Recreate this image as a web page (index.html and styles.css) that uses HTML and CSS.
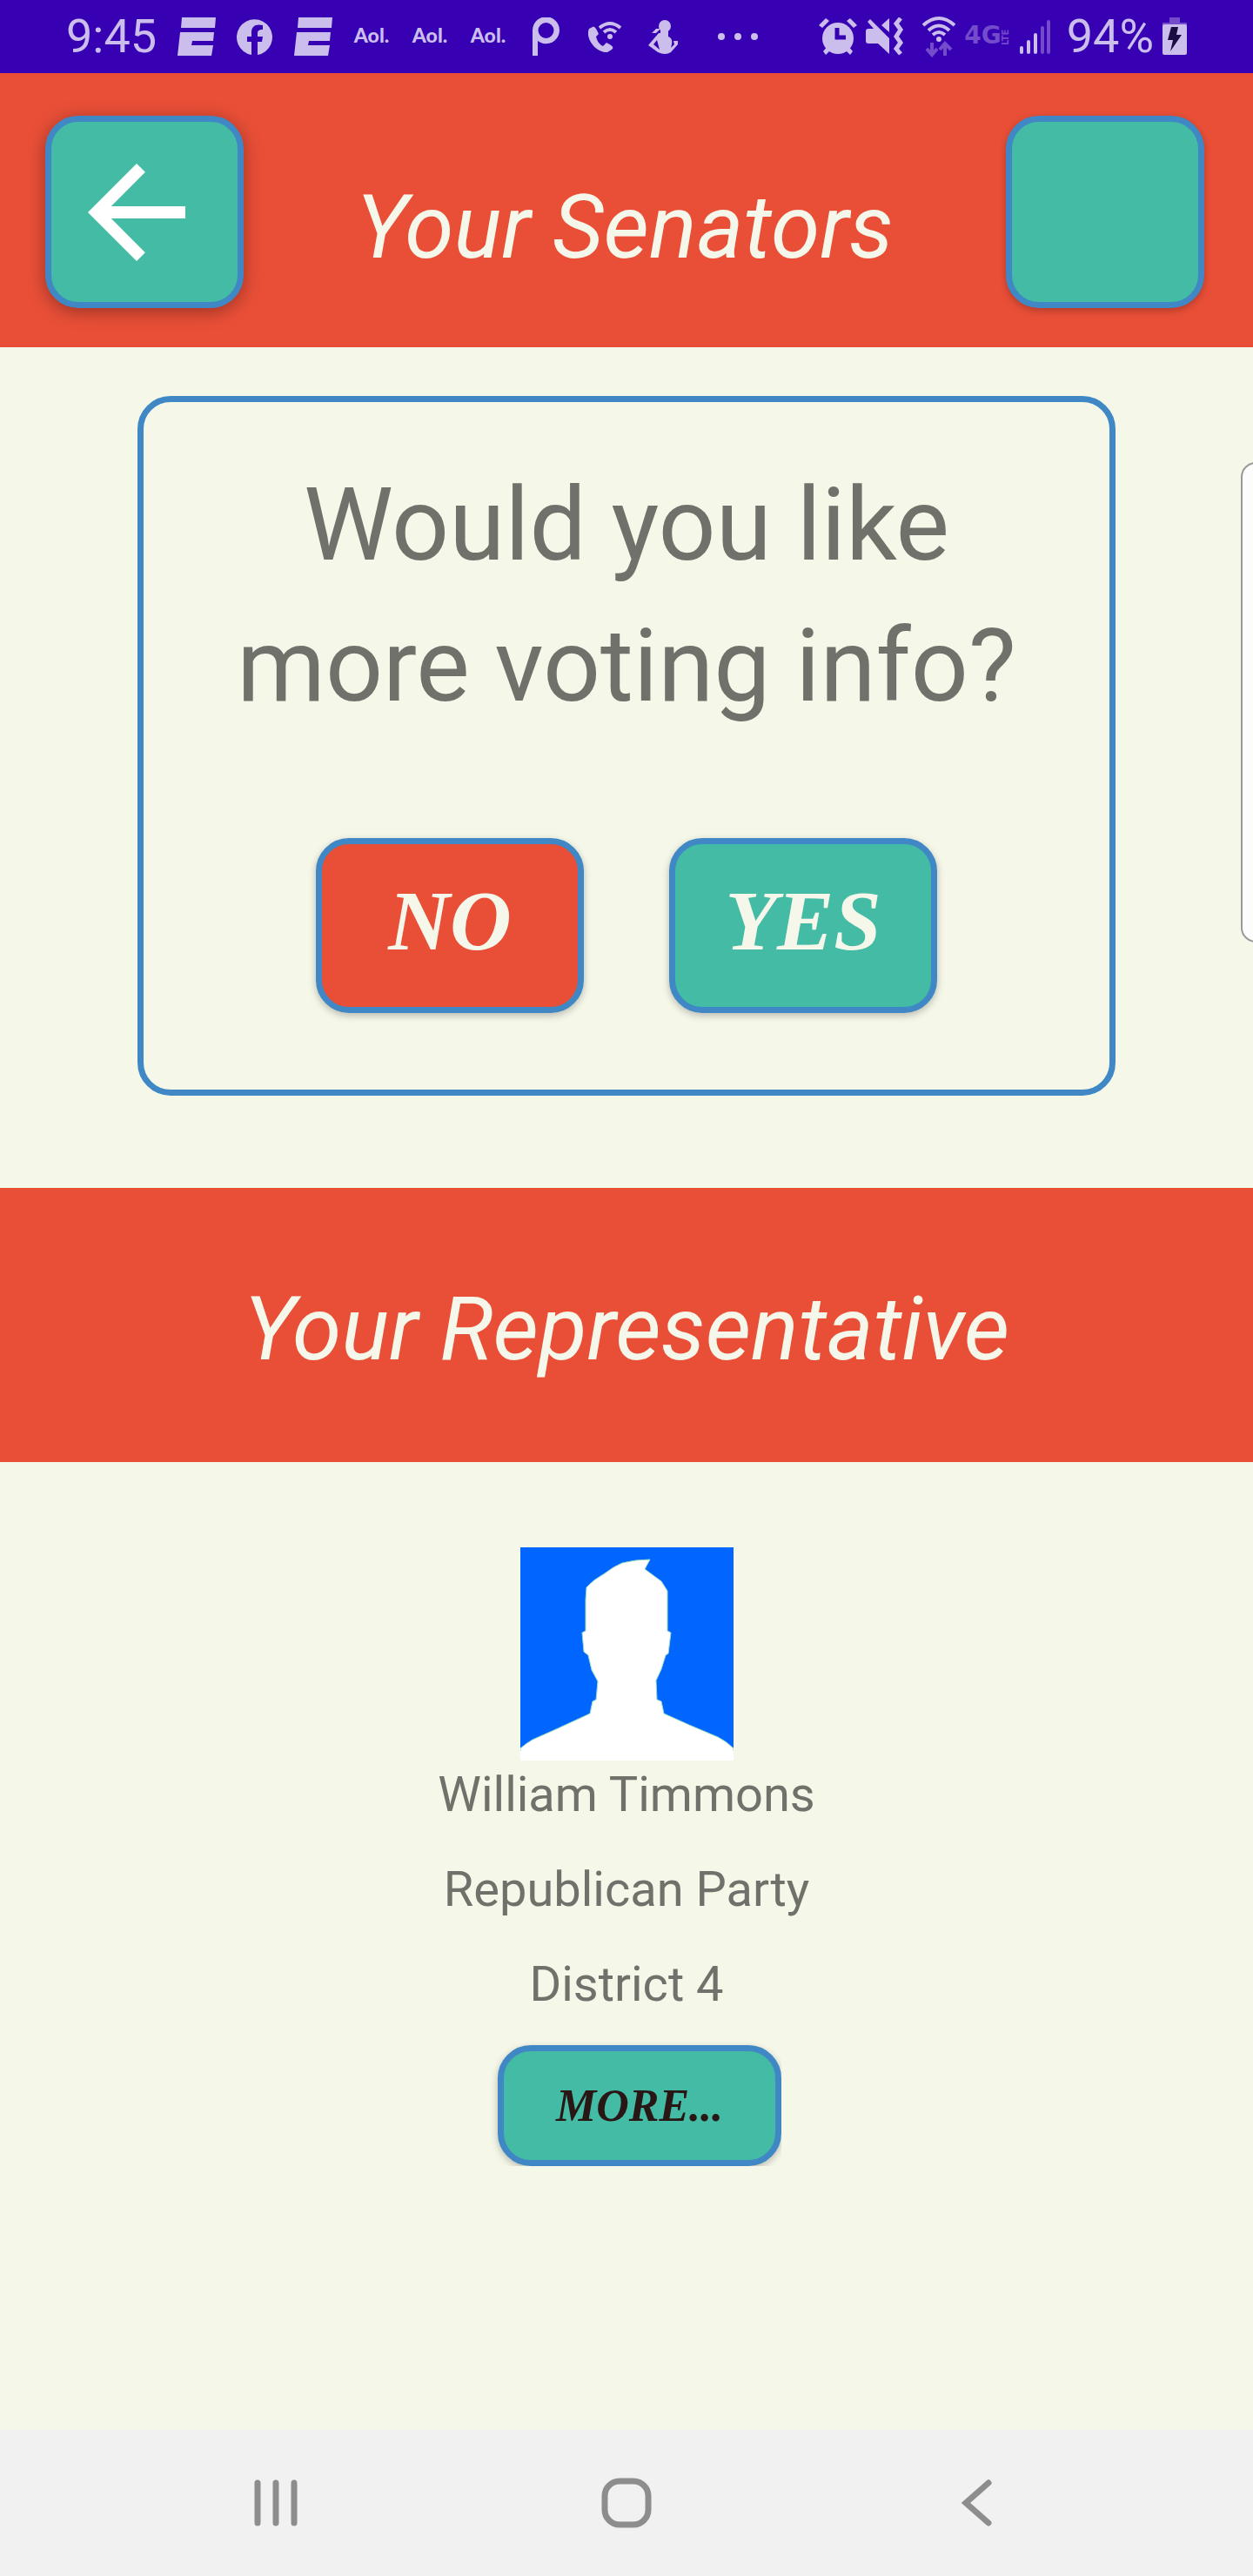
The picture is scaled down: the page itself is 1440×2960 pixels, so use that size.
FILE: index.html
```html
<!DOCTYPE html>
<html lang="en">
<head>
<meta charset="utf-8">
<meta name="viewport" content="width=device-width, initial-scale=1">
<title>Your Senators</title>
<link rel="stylesheet" href="styles.css">
</head>
<body>
<div class="status">
  <div class="status-left">
    <span class="status-text time">9:45</span>
    <svg class="slot" viewBox="0 0 44 44"><path d="M5 0H44L43 12H4ZM3 17H42L41 27H17L16 32H41L39 44H0Z"/></svg>
    <svg class="slot" viewBox="0 0 44 44"><path d="M18 43A20.500 20.500 0 1 1 25 43V28H30L31 22H25V18C25 15 27 14 31 14V9C23 7 18 10 18 17V22H13V28H18Z"/></svg>
    <svg class="slot" viewBox="0 0 44 44"><path d="M5 0H44L43 12H4ZM3 17H42L41 27H17L16 32H41L39 44H0Z"/></svg>
    <span class="slot aol">Aol.</span>
    <span class="slot aol">Aol.</span>
    <span class="slot aol">Aol.</span>
    <svg class="slot" viewBox="0 0 44 44"><path d="M6 15A15.500 15.500 0 1 1 12 27V44H6ZM21.500 6A9 9 0 1 0 21.500 24A9 9 0 1 0 21.500 6Z" fill-rule="evenodd"/></svg>
    <svg class="slot" viewBox="0 0 44 44"><path d="M8 11L4 13C-1 24 12 41 25 40L30 37C33 34 31 33 24 29L20 33C16 31 13 27 12 22L15 19C12 12 10 10 8 11Z"/><g fill="none" stroke="#cbbeec" stroke-width="4"><path d="M16 12Q28 2 40 12M21 17Q28 11 35 17"/></g><circle cx="28" cy="22" r="3"/></svg>
    <svg class="slot" viewBox="0 0 44 44"><circle cx="24" cy="10" r="7"/><path d="M19 15H28V22C33 24 33 28 31 35L35 31L34 27H39V31L31 40Q25 44 16 40L5 32L17 18H19ZM11 31L18 37L15 26ZM9 18L14 13H19L14 18Z"/></svg>
    <svg class="dots" viewBox="0 0 46 8"><circle cx="4" cy="4" r="4"/><circle cx="23" cy="4" r="4"/><circle cx="42" cy="4" r="4"/></svg>
  </div>
  <div class="status-right">
    <svg width="44" height="44" viewBox="0 0 44 44"><path d="M5 39L10 33L14 37L8 43ZM39 39L34 33L30 37L36 43Z"/><circle cx="22" cy="24" r="18"/><path d="M0 9L8 1L12 4L4 12ZM44 9L36 1L32 4L40 12Z"/><path d="M21 12V23H31" fill="none" stroke="#3700b3" stroke-width="5"/></svg>
    <svg width="43" height="44" viewBox="0 0 43 44"><path d="M0 16Q0 13 3 13H9L2 5L5 2L27 24V42L14 30H3Q0 30 0 27ZM18 9L27 1V17Z"/><path d="M40 1L35 7L40 14L35 22L40 29L35 36L40 42" fill="none" stroke="#cbbeec" stroke-width="5"/></svg>
    <svg class="wifi" width="38" height="48" viewBox="0 0 38 48"><g fill="none" stroke="#cbbeec" stroke-width="4"><path d="M1 11Q19-5 37 11M7 17Q19 6 31 17M12 22Q19 16 26 22"/></g><circle cx="19" cy="27" r="3"/><path d="M11 31V44M5 38L11 45L17 38M26 46V32M20 39L26 32L33 39" fill="none" stroke="#734bcb" stroke-width="4"/></svg>
    <span class="network"><span>4G</span><small>LTE</small></span>
    <svg class="signal" width="37" height="40" viewBox="0 0 37 40"><g stroke="#cbbeec" stroke-width="4" stroke-linecap="round"><path d="M3 33V38M11 26V38M19 18V38"/><path d="M27 10V38M34 3V38" stroke="#734bcb"/></g></svg>
    <span class="status-text percent">94%</span>
    <svg width="28" height="44" viewBox="0 0 28 44"><path d="M8 0H20V6H28V12H0V6H8Z" fill="#734bcb"/><rect y="8" width="28" height="35" rx="2"/><path d="M10 11H18L16 20H22L9 39L12 26H6Z" fill="#1c0c43"/></svg>
  </div>
</div>

<header class="band topbar">
  <button class="btn square raised" aria-label="Back"><svg class="arrow" viewBox="4 4 16 16"><path d="M20 11H7.830l5.590-5.590L12 4l-8 8 8 8 1.410-1.410L7.830 13H20z"/></svg></button>
  <h1 class="title">Your Senators</h1>
  <button class="btn square" aria-label="Menu"></button>
</header>

<main class="content">
  <section class="card">
    <p class="question">Would you like<br>more voting info?</p>
    <div class="actions">
      <button class="btn choice no">NO</button>
      <button class="btn choice">YES</button>
    </div>
  </section>

  <div class="band second"><h2 class="title">Your Representative</h2></div>

  <section class="person">
    <svg class="photo" viewBox="0 0 245 245" role="img" aria-label="Portrait placeholder"><rect width="245" height="245" fill="#0066ff"/><path d="M0 245V231Q7 225 14 221L41 209L80 191L83 177L87 175L89 154L82 141L78 124L73 120L71 98L75 96V60L76 46Q84 37 97 30Q107 22 117 18Q132 14 149 14L143 25L162 39L169 50V96L173 98L170 122L167 124L162 140L156 153L157 175L162 177L165 191L194 204L227 218Q237 223 245 231V245Z" fill="#fff" stroke="#9ddcc0" stroke-width="1"/><path d="M0 234H245V245H0Z" fill="#fff"/></svg>
    <p class="detail">William Timmons</p>
    <p class="detail">Republican Party</p>
    <p class="detail">District 4</p>
    <div class="more-row"><button class="btn more">MORE...</button></div>
  </section>
</main>
<div class="edge"></div>

<nav class="nav">
  <button class="nav-btn" aria-label="Recent apps"><svg width="58" height="58" viewBox="0 0 58 58"><path d="M8 6V52M29 6V52M50 6V52"/></svg></button>
  <button class="nav-btn" aria-label="Home"><svg width="58" height="58" viewBox="0 0 58 58"><rect x="4" y="4" width="50" height="50" rx="17"/></svg></button>
  <button class="nav-btn" aria-label="Go back"><svg width="58" height="58" viewBox="0 0 58 58"><path d="M42 6L16 29L42 52"/></svg></button>
</nav>
</body>
</html>
```
FILE: styles.css
```css
* { box-sizing: border-box; }

body {
  margin: 0;
  min-height: 100vh;
  display: flex;
  flex-direction: column;
  position: relative;
  overflow-x: hidden;
  background: #f5f7e9;
  color: #70716a;
  font-family: "Roboto", sans-serif;
}

h1, h2, p { margin: 0; }
button { margin: 0; padding: 0; cursor: pointer; }

/* System status bar */
.status {
  display: flex;
  justify-content: space-between;
  align-items: center;
  height: 84px;
  padding: 0 76px;
  background: #3700b3;
  color: #cbbeec;
  fill: #cbbeec;
}
.status svg { display: block; flex: none; }
.status-left { display: flex; align-items: center; gap: 23px; }
.status-right { display: flex; align-items: center; gap: 10px; }
.status-text { font: 400 54px/60px "Roboto", sans-serif; }
.time { width: 105px; }
.slot { width: 44px; height: 44px; }
.aol {
  font: 900 23px/40px "Lato", sans-serif;
  text-align: center;
}
.dots { width: 46px; height: 8px; margin-left: 18px; }
.wifi { margin-left: 12px; }
.network { display: flex; height: 44px; color: #734bcb; }
.network span { font: 700 28px/42px "DejaVu Sans", sans-serif; height: 44px; }
.network small {
  height: 32px;
  font: 700 10px/10px "DejaVu Sans", sans-serif;
  writing-mode: vertical-rl;
  transform: rotate(180deg);
}
.percent { margin-left: 8px; }

/* Red title bands */
.band { background: #e94f37; color: #f6f7eb; }
.topbar {
  display: grid;
  grid-template-columns: auto 1fr auto;
  align-items: center;
  padding: 49px 56px 45px 52px;
}
.second { padding: 90px 24px 81px; }
.title {
  font-size: 102px;
  line-height: 144px;
  font-style: italic;
  font-weight: 400;
  text-align: center;
}
.topbar .title { padding-top: 34px; }

/* Buttons */
.btn {
  display: flex;
  align-items: center;
  justify-content: center;
  border: 7px solid #3f88c5;
  border-radius: 38px;
  background: #44bba4;
  color: #f6f7eb;
  font-family: "Liberation Serif", serif;
  font-style: italic;
  font-weight: 700;
  box-shadow: 0 3px 8px rgba(0, 0, 0, 0.25);
}
.square { width: 228px; height: 221px; }
.raised { box-shadow: 0 4px 20px rgba(0, 0, 0, 0.35); }
.arrow { width: 112px; height: 112px; margin-right: 18px; fill: #fff; }
.choice {
  width: 308px;
  height: 201px;
  padding-bottom: 12px;
  font-size: 98px;
}
.no { background: #e94f37; }

/* Voting question */
.content { flex: 1; }
.card {
  margin: 56px 11% 106px;
  padding: 60px 24px 88px;
  border: 7px solid #3f88c5;
  border-radius: 38px;
}
.question {
  font-size: 116px;
  line-height: 162px;
  text-align: center;
}
.actions { display: flex; justify-content: center; gap: 98px; margin-top: 117px; }

/* Representative */
.person {
  display: flex;
  flex-direction: column;
  align-items: center;
  padding: 98px 24px 48px;
}
.photo { width: 245px; height: 245px; margin-bottom: -15px; }
.detail { font-size: 56px; line-height: 109px; }
.more-row { padding: 15px 0 0 30px; overflow: hidden; }
.more { width: 326px; height: 139px; font-size: 52px; color: #291715; }

/* Edge panel handle, partly past the right side of the screen */
.edge {
  position: absolute;
  top: 531px;
  right: -20px;
  width: 34px;
  height: 552px;
  border: 2px solid #999;
  border-radius: 20px;
  background: #fcfcfc;
}

/* System navigation */
.nav {
  display: flex;
  justify-content: space-between;
  align-items: center;
  height: 168px;
  padding: 0 20%;
  background: #f1f1f1;
}
.nav-btn { display: flex; border: 0; background: none; }
.nav-btn svg {
  fill: none;
  stroke: #8d8d8d;
  stroke-width: 7;
  stroke-linecap: round;
}
```
